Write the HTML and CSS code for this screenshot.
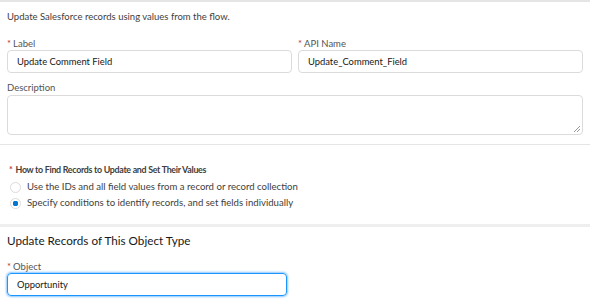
FILE: index.html
```html
<!DOCTYPE html>
<html>
<head>
<meta charset="utf-8">
<link rel="stylesheet" href="styles.css">
</head>
<body>
<div class="page">
  <section class="sec sec-top">
    <p class="intro">Update Salesforce records using values from the flow.</p>
    <div class="grid2">
      <div class="field">
        <label class="lbl"><span class="req">*</span>Label</label>
        <div class="input">Update Comment Field</div>
      </div>
      <div class="field">
        <label class="lbl"><span class="req">*</span>API Name</label>
        <div class="input">Update_Comment_Field</div>
      </div>
    </div>
    <div class="field desc">
      <label class="lbl">Description</label>
      <div class="textarea"><span class="grip"></span></div>
    </div>
  </section>
  <section class="sec sec-radio">
    <div class="qhead"><span class="req">*</span>How to Find Records to Update and Set Their Values</div>
    <div class="radio"><span class="dot"></span>Use the IDs and all field values from a record or record collection</div>
    <div class="radio"><span class="dot on"></span>Specify conditions to identify records, and set fields individually</div>
  </section>
  <section class="sec sec-obj">
    <h2 class="h2">Update Records of This Object Type</h2>
    <div class="field obj">
      <label class="lbl"><span class="req">*</span>Object</label>
      <div class="input focus">Opportunity</div>
    </div>
  </section>
</div>
</body>
</html>
```
FILE: styles.css
```css
html, body { margin: 0; padding: 0; background: #fff; }
body {
  font-family: Lato, "Open Sans", sans-serif;
  color: #3e3e3c;
  width: 590px;
  height: 304px;
  overflow: hidden;
}
.page { border-top: 2px solid #e5e5e5; }
.sec { padding: 0 7px; }
.sec-top { padding-top: 8px; padding-bottom: 9px; border-bottom: 1px solid #e5e5e5; }
.intro { margin: 0; font-size: 9.5px; line-height: 14px; }
.grid2 { display: grid; grid-template-columns: 1fr 1fr; column-gap: 6px; margin-top: 14px; }
.field { display: flex; flex-direction: column; }
.lbl { font-size: 9.5px; line-height: 12px; color: #545454; margin-bottom: 0; }
.req { color: #c23934; margin-right: 2px; }
.input {
  box-sizing: border-box;
  height: 23px;
  border: 1px solid #dddbda;
  border-radius: 4px;
  padding: 0 9px;
  font-size: 9.4px;
  line-height: 21px;
  color: #181818;
}
.desc { margin-top: 9px; }
.textarea {
  box-sizing: border-box;
  height: 40px;
  margin-top: 1px;
  border: 1px solid #dddbda;
  border-radius: 4px;
  position: relative;
}
.grip {
  position: absolute; right: 2px; bottom: 2px; width: 6px; height: 6px;
  background: linear-gradient(135deg, transparent 45%, #999 45%, #999 55%, transparent 55%, transparent 70%, #999 70%, #999 80%, transparent 80%);
}
.sec-radio { padding-top: 18px; padding-bottom: 13px; border-bottom: 3px solid #eeeeee; }
.qhead { font-size: 8.9px; letter-spacing: -0.3px; font-weight: 700; line-height: 14px; color: #3e3e3c; margin-bottom: 2px; }
.qhead .req { margin-right: 3px; margin-left: 2px; }
.radio { display: flex; align-items: center; font-size: 9.6px; line-height: 16px; height: 16px; color: #3e3e3c; }
.dot {
  box-sizing: border-box;
  width: 11px; height: 11px;
  border: 1px solid #dddbda;
  border-radius: 50%;
  margin: 0 6px 0 3px;
  background: #fff;
}
.dot.on { background: radial-gradient(circle, #0176d3 0 2.6px, #fff 3px); }
.sec-obj { padding-top: 4px; }
.h2 { margin: 0; font-size: 11.7px; font-weight: 400; line-height: 18px; color: #181818; }
.obj { width: 280px; margin-top: 12px; }
.input.focus { border-color: #1b96ff; box-shadow: 0 0 2px 1px #8bc6ff; }
```
